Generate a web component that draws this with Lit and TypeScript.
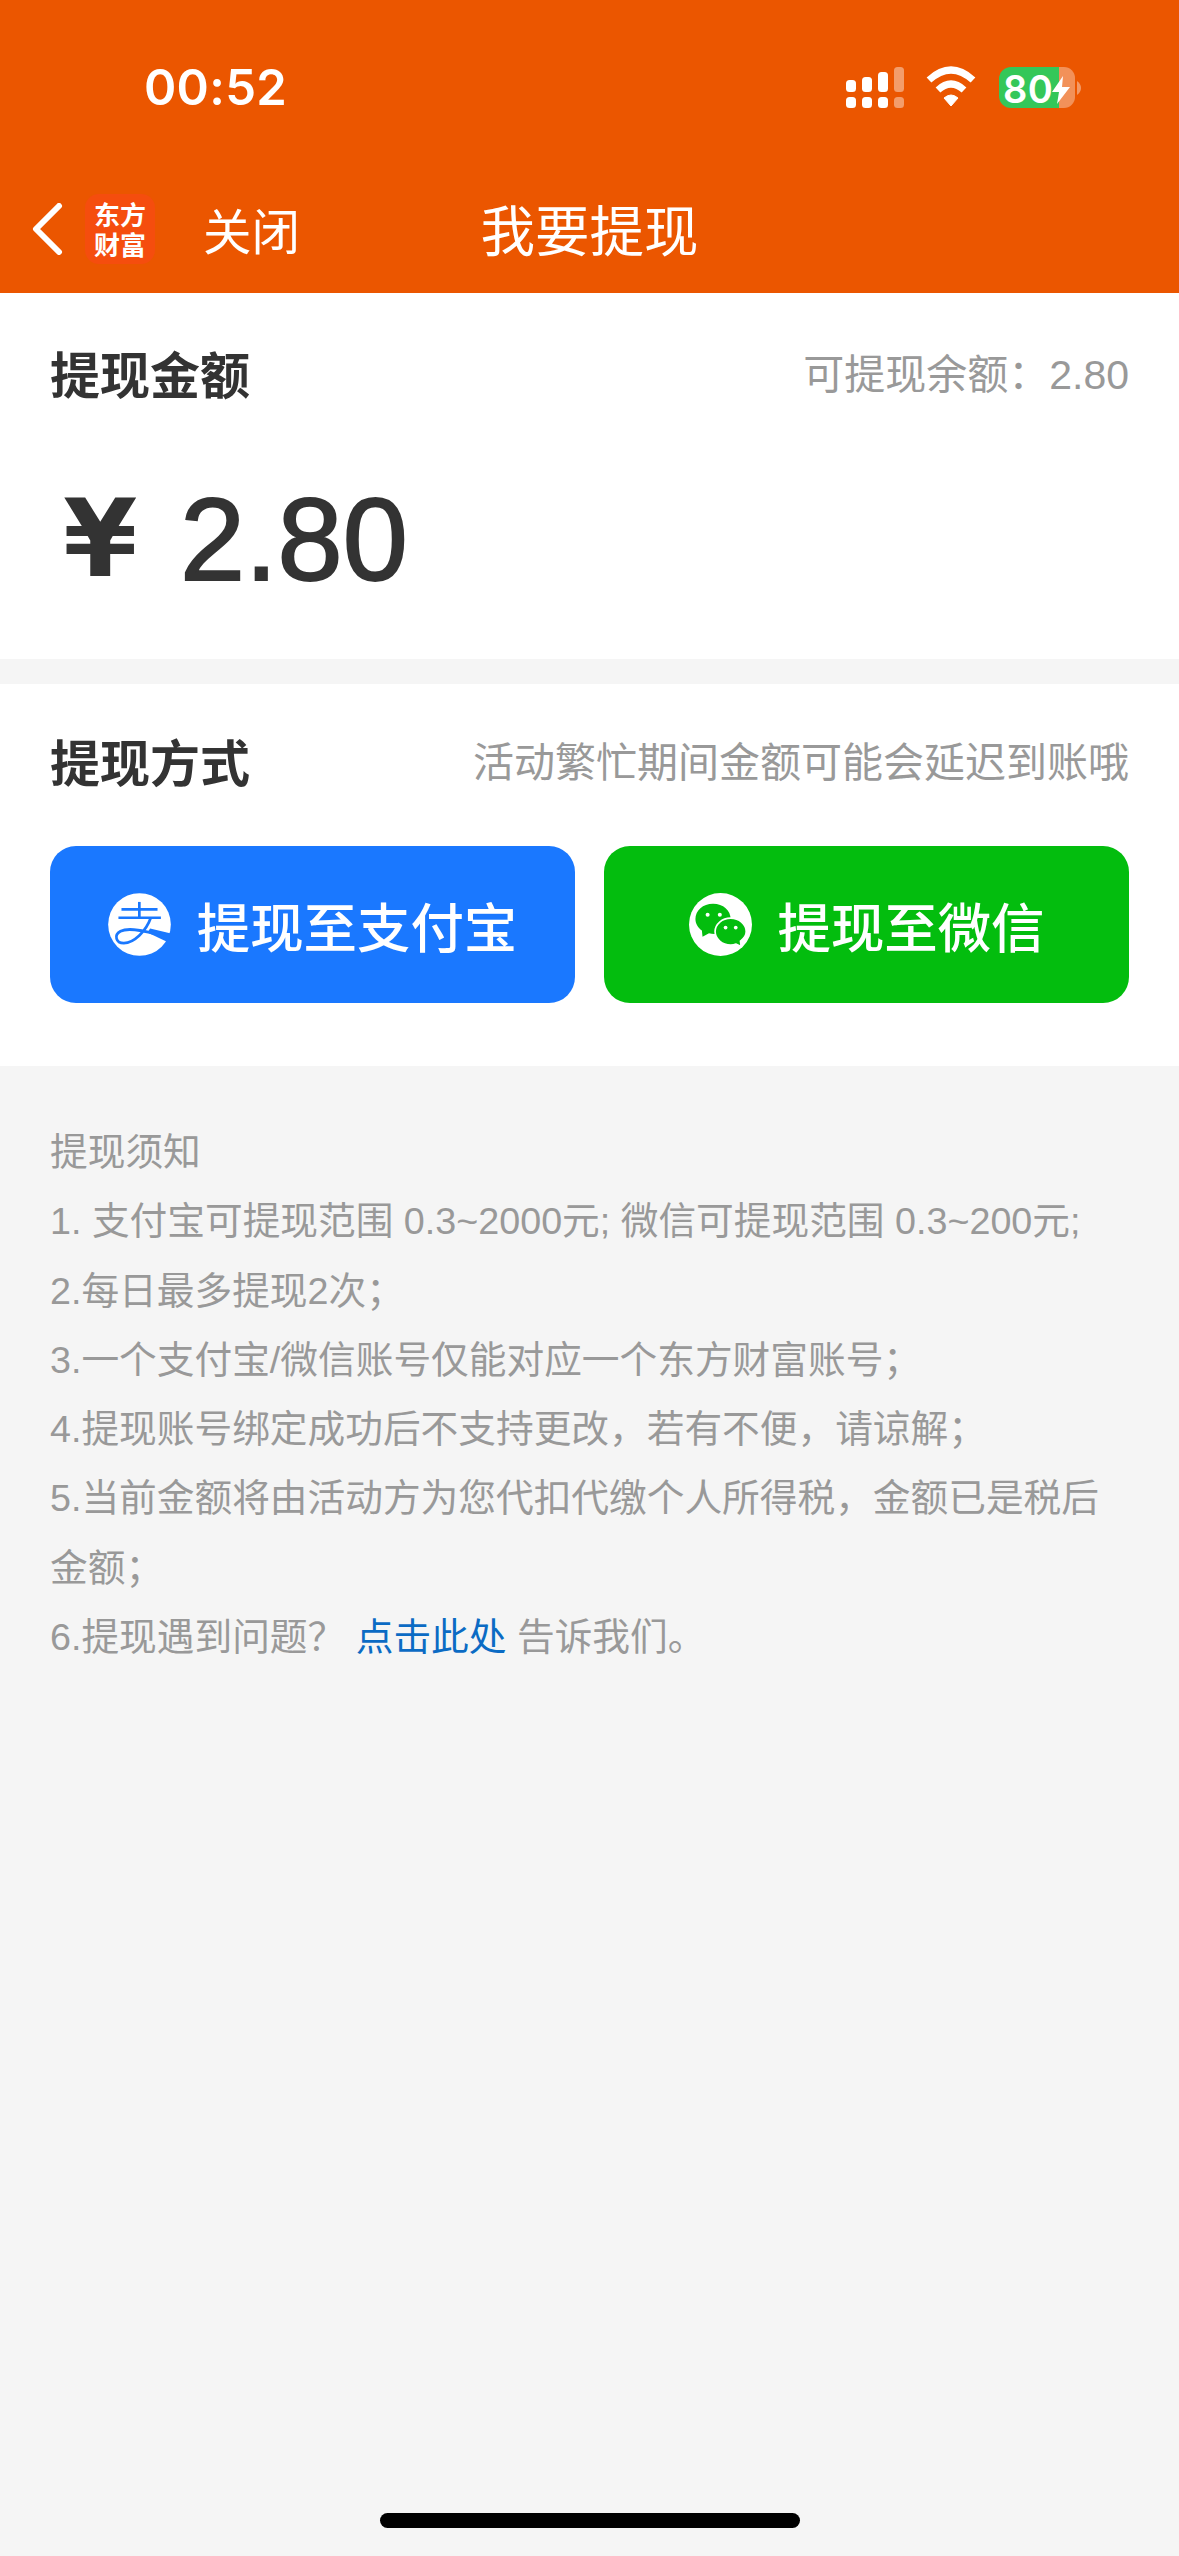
import { LitElement, html, css, svg } from "lit";
import { customElement } from "lit/decorators.js";

@customElement("app-root")
export class AppRoot extends LitElement {
  static styles = css`
    :host { display: block; width: 1179px; height: 2556px; background: #f5f5f5; font-family: "Liberation Sans", "Noto Sans CJK SC", sans-serif; overflow: hidden; position: relative; }
    .head { background: #eb5600; height: 293px; color: #fff; display: flex; flex-direction: column; }
    .status { height: 176px; display: flex; align-items: center; padding-left: 144px; box-sizing: border-box; flex: none; }
    .time { font-family: "Inter", sans-serif; font-size: 49px; font-weight: 600; line-height: 60px; width: 702px; letter-spacing: 0.3px; }
    .status-icons { position: relative; display: flex; align-items: center; }
    .batt-text { position: absolute; left: 157px; top: 1px; font-family: "Inter", sans-serif; font-size: 38px; line-height: 44px; font-weight: 600; letter-spacing: .5px; }
    .nav { height: 105px; position: relative; display: flex; align-items: center; padding-left: 32px; box-sizing: border-box; flex: none; }
    .back { width: 32px; height: 52px; flex: none; }
    .logo { width: 70px; height: 70px; border-radius: 14px; background: #f54d0e; margin-left: 21px; display: flex; flex-direction: column; align-items: center; justify-content: center; font-size: 26px; font-weight: 700; line-height: 30px; font-family: "Noto Sans CJK SC", sans-serif; flex: none; }
    .logo span { display: block; height: 30px; overflow: hidden; }
    .close { font-size: 48.5px; margin-left: 48px; font-family: "Noto Sans CJK SC", sans-serif; line-height: 60px; }
    .title { position: absolute; left: 0; right: 0; top: 17px; text-align: center; font-size: 54.5px; font-family: "Noto Sans CJK SC", sans-serif; line-height: 70px; }
    .card { background: #fff; padding: 0 50px; box-sizing: border-box; }
    .amount-card { height: 366px; margin-bottom: 25px; }
    .row { display: flex; justify-content: space-between; align-items: center; height: 164px; }
    h2 { margin: 0 0 6px; font-size: 50px; font-weight: 700; color: #333; line-height: 60px; font-family: "Noto Sans CJK SC", sans-serif; }
    .hint { font-size: 41px; color: #999; line-height: 50px; }
    .amount { display: flex; align-items: center; color: #333; height: 150px; padding-left: 13px; margin-top: 7px; }
    .yen { font-size: 107px; font-weight: 700; width: 117px; font-family: "DejaVu Sans", sans-serif; }
    .val { font-size: 117px; font-family: "Liberation Sans", sans-serif; -webkit-text-stroke: 2px #333; }
    .way-card { height: 382px; }
    .way-card .row { height: 162px; padding-bottom: 5px; box-sizing: border-box; }
    .buttons { display: flex; gap: 29px; }
    .btn { flex: 1; height: 157px; border-radius: 26px; color: #fff; display: flex; align-items: center; justify-content: center; gap: 26px; font-size: 53.4px; font-family: "Noto Sans CJK SC", sans-serif; font-weight: 500; }
    .ali { background: #1a78ff; }
    .wx { background: #03bd0e; }
    .btn svg { width: 63px; height: 63px; flex: none; }
    .notes { padding: 52px 50px 0; color: #999; font-size: 37.7px; line-height: 69.3px; }
    .notes div { white-space: nowrap; }
    a { color: #0b6bc4; text-decoration: none; }
    .home { position: absolute; left: 380px; top: 2513px; width: 420px; height: 15px; border-radius: 8px; background: #000; }
  `;

  private statusIcons() {
    return svg`<svg width="240" height="44" viewBox="846 66 240 44">
      <g fill="#fff">
        <rect x="846" y="80" width="10" height="12" rx="3.5"/>
        <rect x="862" y="77" width="10" height="15" rx="3.5"/>
        <rect x="878" y="72" width="10" height="20" rx="3.5"/>
        <rect x="846" y="97" width="10" height="11" rx="3.5"/>
        <rect x="862" y="97" width="10" height="11" rx="3.5"/>
        <rect x="878" y="97" width="10" height="11" rx="3.5"/>
      </g>
      <g fill="#fff" fill-opacity=".42">
        <rect x="894" y="67" width="10" height="25" rx="3.5"/>
        <rect x="894" y="97" width="10" height="11" rx="3.5"/>
      </g>
      <g fill="none" stroke="#fff" stroke-width="7">
        <path d="M929 80 Q951 60 973 80"/>
        <path d="M938 90 Q951 78 964 90"/>
      </g>
      <path d="M944 98 Q951 92 958 98 L951 106Z" fill="#fff" stroke="#fff" stroke-width="1" stroke-linejoin="round"/>
      <path d="M1059 67 H1064 a11 11 0 0 1 11 11 V97 a11 11 0 0 1 -11 11 H1059Z" fill="#fff" fill-opacity=".35"/>
      <path d="M1011 67 H1059 V108 H1011 a12 12 0 0 1 -12 -12 V79 a12 12 0 0 1 12 -12Z" fill="#34c759"/>
      <path d="M1077 81 q4 3 4 7 t-4 7Z" fill="#fff" fill-opacity=".4"/>
      <path d="M1063 76 L1052 92 H1059 L1057 104 L1070 87 H1062Z" fill="#fff"/>
    </svg>`;
  }

  render() {
    return html`
      <div class="head">
        <div class="status">
          <div class="time">00:52</div>
          <div class="status-icons">${this.statusIcons()}<span class="batt-text">80</span></div>
        </div>
        <div class="nav">
          <svg class="back" viewBox="0 0 32 52"><path d="M27 3 L4 26 L27 49" fill="none" stroke="#fff" stroke-width="6" stroke-linecap="round" stroke-linejoin="round"/></svg>
          <div class="logo"><span>东方</span><span>财富</span></div>
          <div class="close">关闭</div>
          <div class="title">我要提现</div>
        </div>
      </div>
      <div class="card amount-card">
        <div class="row"><h2>提现金额</h2><span class="hint">可提现余额：2.80</span></div>
        <div class="amount"><span class="yen">¥</span><span class="val">2.80</span></div>
      </div>
      <div class="card way-card">
        <div class="row"><h2>提现方式</h2><span class="hint">活动繁忙期间金额可能会延迟到账哦</span></div>
        <div class="buttons">
          <div class="btn ali">
            <svg viewBox="55 42 187 186">
              <circle cx="148.5" cy="135" r="93" fill="#fff"/>
              <g fill="none" stroke="#1a78ff" stroke-width="8">
                <path d="M95 90 H202"/><path d="M86 115 H212"/><path d="M148 68 V115"/>
                <path d="M182 115 C168 155 132 190 102 190 C78 190 72 166 92 155 C118 142 170 156 200 164"/>
              </g>
              <path d="M180 147 L246 163 L230 186 L172 159Z" fill="#1a78ff"/>
            </svg>
            <span>提现至支付宝</span>
          </div>
          <div class="btn wx">
            <svg viewBox="57 38 186 186">
              <circle cx="150" cy="131" r="93" fill="#fff"/>
              <path d="M128 70 C98 70 76 90 76 115 C76 129 84 141 95 149 L97 167 L116 157 C121 158 126 159 132 159 C160 159 180 140 180 115 C180 90 158 70 128 70Z" fill="#03bd0e"/>
              <path d="M180 112 C155 112 134 130 134 152 C134 174 155 192 180 192 C186 192 191 191 196 189 L211 196 L209 180 C219 173 226 163 226 152 C226 130 205 112 180 112Z" fill="#03bd0e" stroke="#fff" stroke-width="5"/>
              <circle cx="112" cy="102" r="6" fill="#fff"/><circle cx="148" cy="102" r="6" fill="#fff"/>
              <circle cx="165" cy="140" r="5.5" fill="#fff"/><circle cx="195" cy="140" r="5.5" fill="#fff"/>
            </svg>
            <span>提现至微信</span>
          </div>
        </div>
      </div>
      <div class="notes">
        <div>提现须知</div>
        <div>1. 支付宝可提现范围 0.3~2000元; 微信可提现范围 0.3~200元;</div>
        <div>2.每日最多提现2次；</div>
        <div>3.一个支付宝/微信账号仅能对应一个东方财富账号；</div>
        <div>4.提现账号绑定成功后不支持更改，若有不便，请谅解；</div>
        <div>5.当前金额将由活动方为您代扣代缴个人所得税，金额已是税后</div>
        <div>金额；</div>
        <div>6.提现遇到问题？ <a>点击此处</a> 告诉我们。</div>
      </div>
      <div class="home"></div>
    `;
  }
}
